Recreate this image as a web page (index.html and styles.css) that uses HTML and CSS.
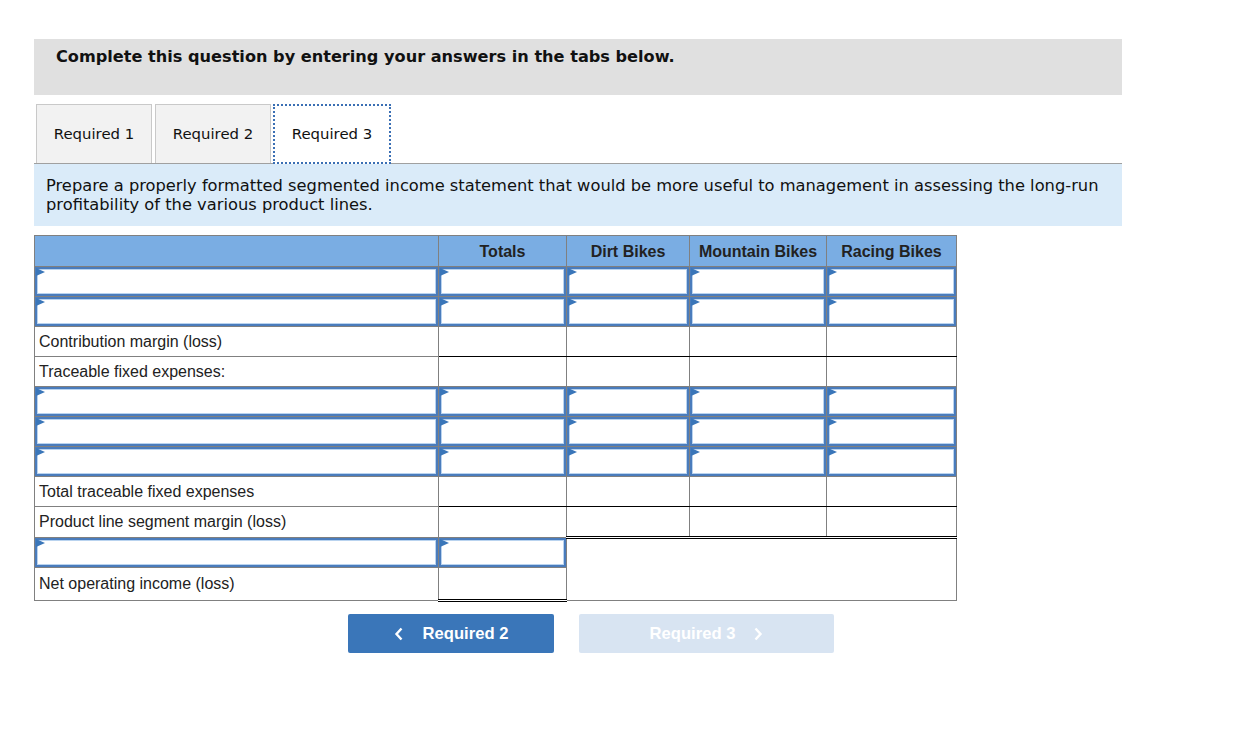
FILE: index.html
```html
<!DOCTYPE html>
<html>
<head>
<meta charset="utf-8">
<link rel="stylesheet" href="styles.css">
</head>
<body>
<div class="page">
  <div class="banner">Complete this question by entering your answers in the tabs below.</div>
  <div class="tabs">
    <div class="tab">Required 1</div>
    <div class="tab">Required 2</div>
    <div class="tab active">Required 3</div>
  </div>
  <div class="prompt">Prepare a properly formatted segmented income statement that would be more useful to management in assessing the long-run profitability of the various product lines.</div>
  <table class="sheet">
    <colgroup>
      <col class="c-label"><col class="c-tot"><col class="c-dirt"><col class="c-mtn"><col class="c-race">
    </colgroup>
    <thead>
      <tr class="head"><th></th><th>Totals</th><th>Dirt Bikes</th><th>Mountain Bikes</th><th>Racing Bikes</th></tr>
    </thead>
    <tbody>
      <tr><td class="in"><div class="box"></div></td><td class="in"><div class="box"></div></td><td class="in"><div class="box"></div></td><td class="in"><div class="box"></div></td><td class="in"><div class="box"></div></td></tr>
      <tr><td class="in"><div class="box"></div></td><td class="in"><div class="box"></div></td><td class="in"><div class="box"></div></td><td class="in"><div class="box"></div></td><td class="in"><div class="box"></div></td></tr>
      <tr><td class="lbl">Contribution margin (loss)</td><td class="sum"></td><td class="sum"></td><td class="sum"></td><td class="sum"></td></tr>
      <tr><td class="lbl">Traceable fixed expenses:</td><td></td><td></td><td></td><td></td></tr>
      <tr><td class="in"><div class="box"></div></td><td class="in"><div class="box"></div></td><td class="in"><div class="box"></div></td><td class="in"><div class="box"></div></td><td class="in"><div class="box"></div></td></tr>
      <tr><td class="in"><div class="box"></div></td><td class="in"><div class="box"></div></td><td class="in"><div class="box"></div></td><td class="in"><div class="box"></div></td><td class="in"><div class="box"></div></td></tr>
      <tr><td class="in"><div class="box"></div></td><td class="in"><div class="box"></div></td><td class="in"><div class="box"></div></td><td class="in"><div class="box"></div></td><td class="in"><div class="box"></div></td></tr>
      <tr><td class="lbl">Total traceable fixed expenses</td><td class="sum"></td><td class="sum"></td><td class="sum"></td><td class="sum"></td></tr>
      <tr><td class="lbl">Product line segment margin (loss)</td><td></td><td class="dbl"></td><td class="dbl"></td><td class="dbl"></td></tr>
      <tr><td class="in"><div class="box"></div></td><td class="in"><div class="box"></div></td><td class="blank" colspan="3" rowspan="2"></td></tr>
      <tr class="last"><td class="lbl">Net operating income (loss)</td><td class="total"></td></tr>
    </tbody>
  </table>
  <div class="nav">
    <button class="btn prev"><svg class="chev" viewBox="0 0 10 14" width="10" height="14"><polyline points="7.5,1.5 2.5,7 7.5,12.5" fill="none" stroke="#fff" stroke-width="2.4"/></svg><span>Required 2</span></button>
    <button class="btn next"><span>Required 3</span><svg class="chev" viewBox="0 0 10 14" width="10" height="14"><polyline points="2.5,1.5 7.5,7 2.5,12.5" fill="none" stroke="#fff" stroke-width="2.4"/></svg></button>
  </div>
</div>
</body>
</html>
```

FILE: styles.css
```css
html, body {
  margin: 0;
  padding: 0;
  background: #fff;
}
.page {
  width: 1088px;
  padding: 39px 0 0 34px;
  font-family: "DejaVu Sans", Verdana, sans-serif;
  color: #111;
}
.banner {
  background: #e0e0e0;
  height: 56px;
  box-sizing: border-box;
  padding: 8px 22px 0;
  font-weight: bold;
  font-size: 16.15px;
  line-height: 20px;
  color: #111;
}
.tabs {
  display: flex;
  margin-top: 9px;
  padding-left: 2px;
  border-bottom: 1px solid #a0a0a0;
  height: 59px;
}
.tab {
  width: 116px;
  height: 59px;
  box-sizing: border-box;
  border: 1px solid #c9c9c9;
  border-bottom: none;
  background: #f2f2f2;
  font-size: 14.9px;
  display: flex;
  align-items: center;
  justify-content: center;
  margin-right: 3px;
  color: #111;
}
.tab.active {
  width: 118px;
  height: 60px;
  background: #fff;
  border: 2px dotted #3a6fb4;
  margin-left: -1px;
}
.prompt {
  background: #daebf9;
  padding: 12px 12px 12px;
  font-size: 16.3px;
  line-height: 19px;
  color: #111;
}
.sheet {
  margin-top: 9px;
  border-collapse: collapse;
  width: 922px;
  table-layout: fixed;
  font-family: "Liberation Sans", Arial, sans-serif;
  font-size: 16px;
  color: #222;
  border: 1px solid #808080;
}
.c-label { width: 404px; }
.c-tot { width: 128px; }
.c-dirt { width: 123px; }
.c-mtn { width: 137px; }
.c-race { width: 130px; }
.sheet th, .sheet td {
  border: 1px solid #808080;
  padding: 0;
  height: 29px;
}
.head th {
  background: #7aade3;
  font-weight: bold;
  height: 31px;
  text-align: center;
  vertical-align: top;
  padding-top: 7px;
  box-sizing: border-box;
  color: #222;
}
.sheet td.lbl {
  padding-left: 4px;
  vertical-align: middle;
}
.sheet td.in {
  padding: 0;
}
.box {
  position: relative;
  height: 25px;
  border: 2px solid #4a7cbc;
  box-shadow: inset 0 0 0 1px #b9d3ef;
  background: #fff;
}
.box::before {
  content: "";
  position: absolute;
  left: -1px;
  top: -1px;
  width: 0;
  height: 0;
  border-left: 9px solid #3a76b9;
  border-top: 4px solid transparent;
  border-bottom: 4px solid transparent;
  z-index: 1;
}
.sheet td.sum {
  border-top: 1px solid #000;
  border-bottom: 1px solid #000;
}
.sheet td.dbl {
  border-bottom: 3px double #000;
}
.sheet td.total {
  border-top: 1px solid #000;
  border-bottom: 3px double #000;
}
.sheet td.blank {
  border-top: 3px double #000;
}
.last td {
  height: 31px;
}
.nav {
  display: flex;
  margin-top: 12px;
  padding-left: 314px;
  gap: 25px;
}
.btn {
  height: 39px;
  border: none;
  border-radius: 2px;
  font-family: "Liberation Sans", Arial, sans-serif;
  font-weight: bold;
  font-size: 16.6px;
  color: #fff;
  display: flex;
  align-items: center;
  justify-content: center;
  gap: 19px;
  padding: 0;
}
.btn.prev {
  width: 206px;
  background: #3a76b9;
}
.btn.next {
  width: 255px;
  background: #d8e4f2;
  gap: 18px;
  padding-left: 0;
}
.chev {
  display: block;
}
```
